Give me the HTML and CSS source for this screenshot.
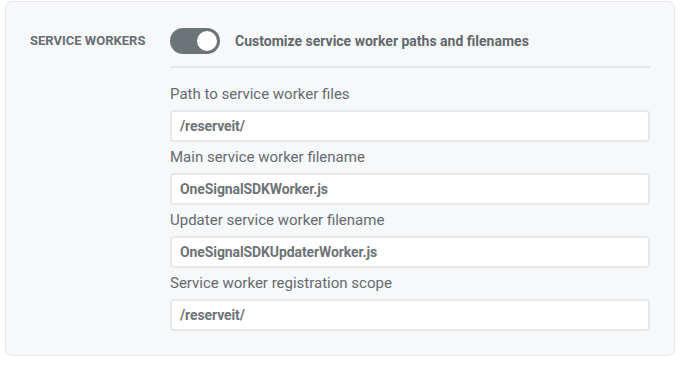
FILE: index.html
```html
<!DOCTYPE html>
<html lang="en">
<head>
    <meta charset="UTF-8">
    <title>Service Workers - Settings</title>
    <link rel="stylesheet" href="styles.css">
</head>
<body>
    <div class="card">
        <div class="section-label">Service Workers</div>
        <div class="section-body">
            <div class="toggle-row">
                <span class="toggle on"><span class="knob"></span></span>
                <span class="toggle-text">Customize service worker paths and filenames</span>
            </div>
            <div class="divider"></div>
            <div class="field">
                <label>Path to service worker files</label>
                <div class="input">/reserveit/</div>
            </div>
            <div class="field">
                <label>Main service worker filename</label>
                <div class="input">OneSignalSDKWorker.js</div>
            </div>
            <div class="field">
                <label>Updater service worker filename</label>
                <div class="input">OneSignalSDKUpdaterWorker.js</div>
            </div>
            <div class="field">
                <label>Service worker registration scope</label>
                <div class="input">/reserveit/</div>
            </div>
        </div>
    </div>
</body>
</html>
```

FILE: styles.css
```css
body {
    font-family: Roboto, "Liberation Sans", Arial, sans-serif;
    margin: 0;
    padding: 1px 6px 0 5px;
    background: #ffffff;
    color: #62686c;
}
.card {
    display: flex;
    background: #f7f8fa;
    border: 1px solid #e6e8eb;
    border-radius: 7px;
    padding: 26px 24px 24px 24px;
    height: 355px;
    box-sizing: border-box;
}
.section-label {
    width: 140px;
    flex-shrink: 0;
    font-size: 13px;
    font-weight: 700;
    text-transform: uppercase;
    line-height: 26px;
    color: #686e72;
}
.section-body {
    flex: 1;
}
.toggle-row {
    display: flex;
    align-items: center;
    gap: 15px;
}
.toggle {
    position: relative;
    width: 50px;
    height: 26px;
    border-radius: 13px;
    background: #6c7477;
    flex-shrink: 0;
}
.toggle .knob {
    position: absolute;
    top: 3px;
    right: 3px;
    width: 20px;
    height: 20px;
    border-radius: 50%;
    background: #ffffff;
}
.toggle-text {
    font-size: 14px;
    font-weight: 700;
    color: #62686c;
}
.divider {
    height: 2px;
    background: #e4e6e9;
    margin: 12px 0 16px;
}
.field {
    margin-bottom: 5px;
}
.field label {
    display: block;
    font-size: 15px;
    line-height: 20px;
    margin-bottom: 6px;
    color: #656b6f;
}
.input {
    height: 32px;
    box-sizing: border-box;
    background: #ffffff;
    border: 2px solid #e7e8ea;
    border-radius: 4px;
    padding: 0 8px;
    font-size: 14px;
    font-weight: 700;
    letter-spacing: -0.1px;
    line-height: 28px;
    color: #6d7377;
}
```
